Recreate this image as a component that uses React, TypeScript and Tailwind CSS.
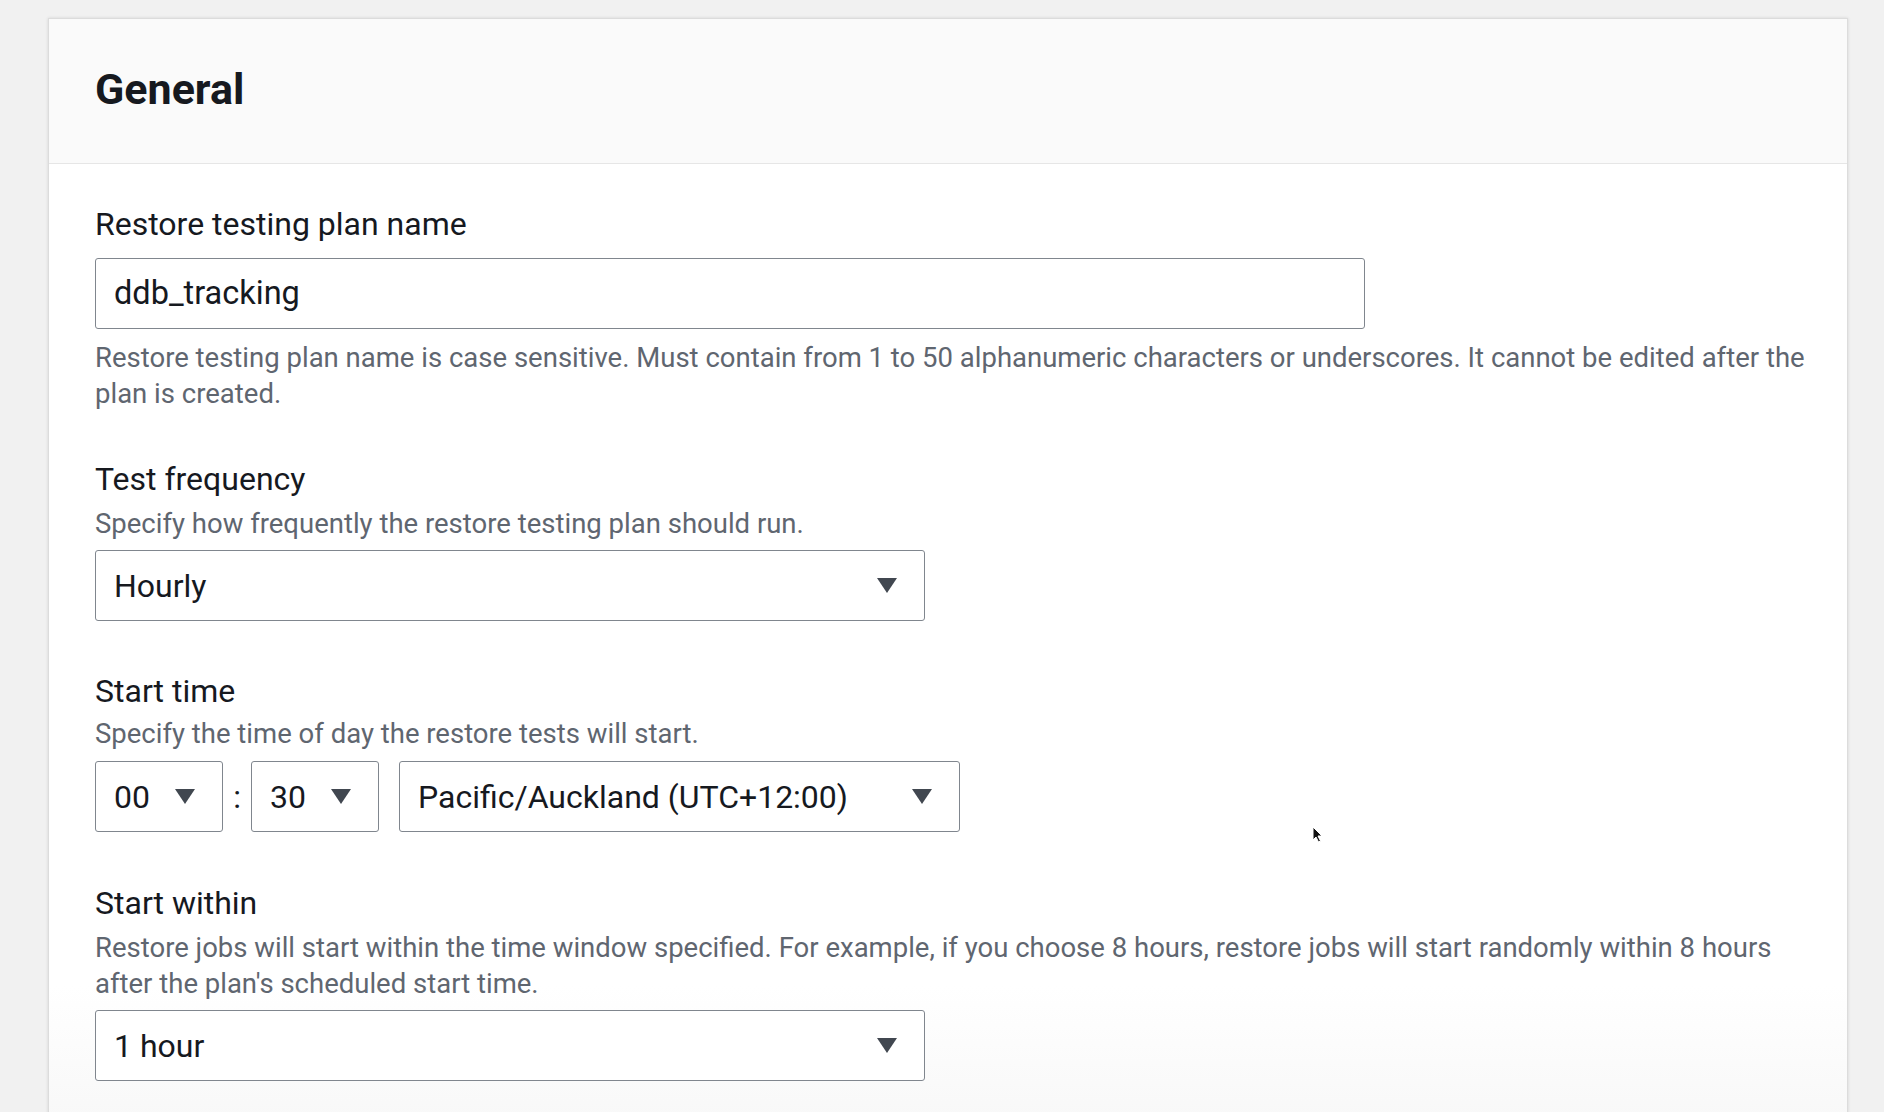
import React from "react";

const Caret = () => (
  <svg width="22" height="17" viewBox="0 0 22 17" className="shrink-0">
    <path d="M1 1h20L11 16z" fill="#414750" />
  </svg>
);

const Select = ({ value, className }: { value: string; className: string }) => (
  <div
    className={`flex h-[71px] items-center justify-between rounded-[3px] border border-[#80868e] bg-white pl-[18px] pr-[26px] text-[32px] text-[#16191f] ${className}`}
  >
    <span>{value}</span>
    <Caret />
  </div>
);

const App = () => {
  return (
    <div
      className="h-[1112px] overflow-hidden bg-[#f1f1f1] pl-[48px] pr-[36px] pt-[18px]"
      style={{ fontFamily: "Roboto, 'Open Sans', sans-serif" }}
    >
      <div className="relative flex h-[1200px] flex-col border-l border-r border-t border-[#dcdcdc] shadow-[0_0_3px_rgba(0,0,0,0.12)]">
        {/* Header */}
        <div className="flex h-[145px] items-center border-b border-[#e6e6e6] bg-[#fafafa] pl-[46px]">
          <h2 className="pb-[4px] text-[43px] font-bold text-[#16191f]">General</h2>
        </div>

        {/* Body */}
        <div className="flex-1 bg-linear-to-b from-white from-[78%] to-[#f3f3f3] pl-[46px] pr-[40px] pt-[40px]">
          {/* Plan name */}
          <div className="flex flex-col">
            <label className="text-[32px] leading-[40px] text-[#16191f]">Restore testing plan name</label>
            <div className="mt-[14px] flex h-[71px] w-[1270px] items-center rounded-[3px] border border-[#80868e] pl-[18px] text-[32.5px] text-[#16191f]">
              ddb_tracking
            </div>
            <p className="mt-[11px] text-[27.5px] leading-[36px] text-[#5f6670]">
              Restore testing plan name is case sensitive. Must contain from 1 to 50 alphanumeric characters or
              underscores. It cannot be edited after the plan is created.
            </p>
          </div>

          {/* Test frequency */}
          <div className="mt-[47px] flex flex-col">
            <label className="text-[32px] leading-[40px] text-[#16191f]">Test frequency</label>
            <p className="mt-[7px] text-[27.5px] leading-[36px] text-[#5f6670]">
              Specify how frequently the restore testing plan should run.
            </p>
            <Select value="Hourly" className="mt-[8px] w-[830px]" />
          </div>

          {/* Start time */}
          <div className="mt-[50px] flex flex-col">
            <label className="text-[32px] leading-[40px] text-[#16191f]">Start time</label>
            <p className="mt-[5px] text-[27.5px] leading-[36px] text-[#5f6670]">
              Specify the time of day the restore tests will start.
            </p>
            <div className="mt-[9px] flex items-center">
              <Select value="00" className="w-[128px]" />
              <span className="w-[28px] text-center text-[32px] text-[#16191f]">:</span>
              <Select value="30" className="w-[128px]" />
              <Select value="Pacific/Auckland (UTC+12:00)" className="ml-[20px] w-[561px]" />
            </div>
          </div>

          {/* Start within */}
          <div className="mt-[51px] flex flex-col">
            <label className="text-[32px] leading-[40px] text-[#16191f]">Start within</label>
            <p className="mt-[7px] text-[27.5px] leading-[36px] text-[#5f6670]">
              Restore jobs will start within the time window specified. For example, if you choose 8 hours, restore
              jobs will start randomly within 8 hours after the plan's scheduled start time.
            </p>
            <Select value="1 hour" className="mt-[8px] w-[830px]" />
          </div>
        </div>

        {/* mouse pointer */}
        <svg className="absolute left-[1263px] top-[807px]" width="11" height="17" viewBox="0 0 11 17">
          <path d="M1 1v13l3-3 2.5 5 2-1-2.5-5h4z" fill="#111" stroke="#fff" strokeWidth="1" />
        </svg>
      </div>
    </div>
  );
};

export default App;
